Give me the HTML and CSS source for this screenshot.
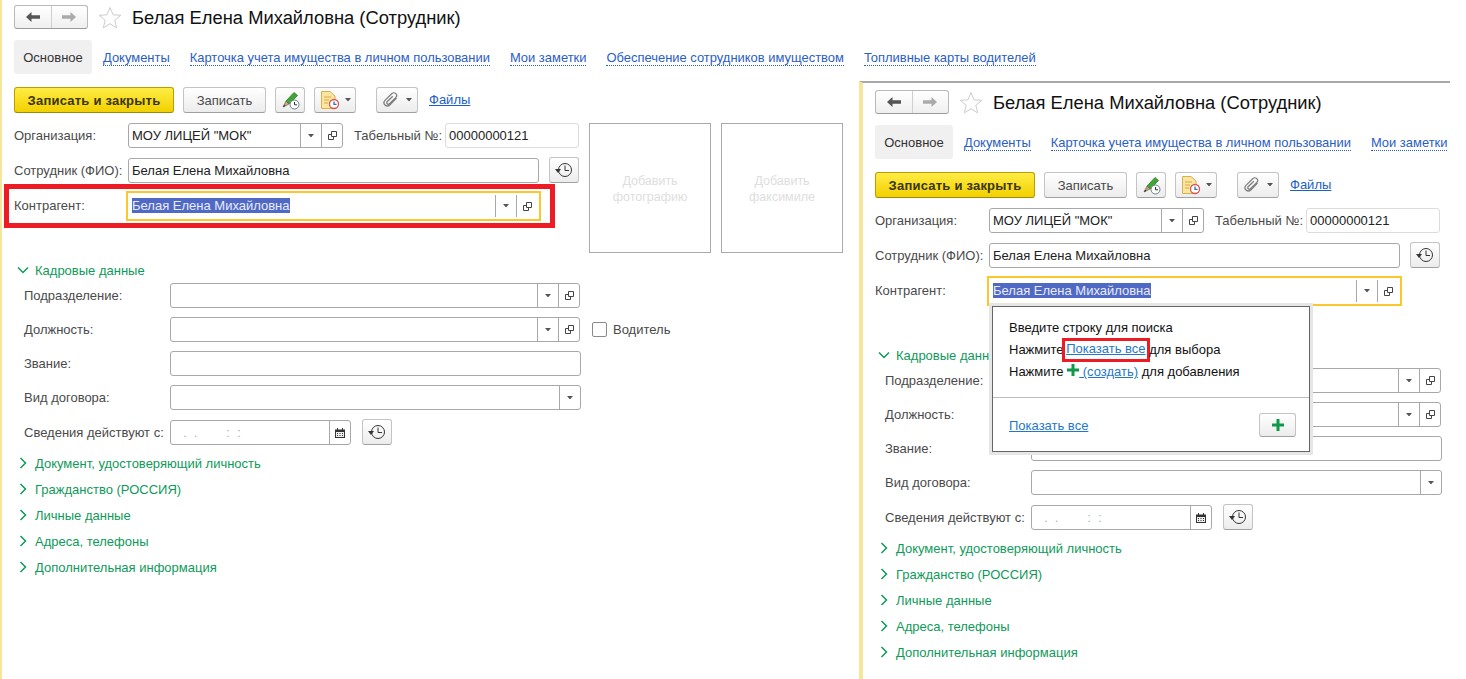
FILE: index.html
```html
<!DOCTYPE html>
<html lang="ru">
<head>
<meta charset="utf-8">
<title>Белая Елена Михайловна (Сотрудник)</title>
<link rel="stylesheet" href="styles.css">
</head>
<body>
<svg class="defs" width="0" height="0" aria-hidden="true">
  <symbol id="i-back" viewBox="0 0 14 10"><path d="M0 5 5.500 0V3.300H14V6.700H5.500V10Z"/></symbol>
  <symbol id="i-fwd" viewBox="0 0 14 10"><path d="M14 5 8.500 0V3.300H0V6.700H8.500V10Z"/></symbol>
  <symbol id="i-star" viewBox="0 0 24 23"><path d="M12 1.500 15 8.800 22.800 9.300 16.800 14.300 18.700 21.900 12 17.700 5.300 21.900 7.200 14.300 1.200 9.300 9 8.800Z" fill="#fff" stroke="#c9cdd0"/></symbol>
  <symbol id="i-drop" viewBox="0 0 7 4"><path d="M0 0H7L3.500 4Z"/></symbol>
  <symbol id="i-open" viewBox="0 0 9 9"><path d="M3.500 .5H8.500V5.500H3.500ZM3.500 3.500H.5V8.500H5.500V5.500" fill="none" stroke="#444"/></symbol>
  <symbol id="i-hist" viewBox="0 0 18 16"><circle cx="10" cy="8" r="6.500" fill="none" stroke="#333"/><path d="M10 3.500V8.500H14" fill="none" stroke="#333"/><path d="M0 7H6L3 11Z" fill="#333"/></symbol>
  <symbol id="i-cal" viewBox="0 0 10 10"><path d="M0 1.500H2V0H3V1.500H7V0H8V1.500H10V10H0Z" fill="#333"/><path d="M1 4H9V9H1Z" fill="#eee"/><path d="M2 5H3V6H2ZM4.500 5H5.500V6H4.500ZM7 5H8V6H7ZM2 7H3V8H2ZM4.500 7H5.500V8H4.500ZM7 7H8V8H7Z" fill="#333"/></symbol>
  <symbol id="i-pen" viewBox="0 0 20 20"><path d="M6 11 14 2.500 17.500 5.500 9 14Z" fill="#3fa535" stroke="#2d7a28" stroke-width=".8"/><path d="M6 11 9 14 3 17Z" fill="#c9a86a" stroke="#555" stroke-width=".6"/><path d="M3 17 4.200 14.800 5.500 16Z" fill="#333"/><circle cx="14.500" cy="14.500" r="4.500" fill="#fff" stroke="#6b7d8c"/><path d="M14.500 12V14.800H17" fill="none" stroke="#333"/></symbol>
  <symbol id="i-doc" viewBox="0 0 20 20"><path d="M1.500 1.500H10L15 6V18.500H1.500Z" fill="#fbe5a3" stroke="#d9b04a"/><path d="M4 7H11M4 10H9M4 13H8" stroke="#d9a93d"/><circle cx="14" cy="14" r="4.500" fill="#fff" stroke="#d9534f" stroke-width="1.300"/><path d="M14 11.500V14.300H16.500" fill="none" stroke="#2f6fb7" stroke-width="1.300"/></symbol>
  <symbol id="i-clip" viewBox="0 0 16 16"><path d="M13.500 6 7 12.800C5.500 14.300 3.300 14.300 2 13 .7 11.700.7 9.600 2.200 8.100L8.700 1.700C9.900.5 11.700.5 12.800 1.600 13.900 2.700 13.900 4.400 12.700 5.600L6.500 11.700C5.800 12.400 4.800 12.400 4.200 11.800 3.600 11.200 3.600 10.200 4.300 9.500L9.800 4.200" fill="none" stroke="#808080" stroke-width="1.300"/></symbol>
  <symbol id="i-plus" viewBox="0 0 12 12"><path d="M4.500 0H7.500V4.500H12V7.500H7.500V12H4.500V7.500H0V4.500H4.500Z" fill="#0e9a48"/></symbol>
  <symbol id="i-down" viewBox="0 0 12 8"><path d="M1 1.500 6 6.500 11 1.500" fill="none" stroke="#0f9a5a" stroke-width="1.500"/></symbol>
  <symbol id="i-right" viewBox="0 0 8 12"><path d="M1.500 1 6.500 6 1.500 11" fill="none" stroke="#0f9a5a" stroke-width="1.500"/></symbol>
</svg>

<section class="window window-main">
  <header class="head">
    <div class="nav">
      <span class="nav-btn"><svg class="arrow arrow-on"><use href="#i-back"/></svg></span>
      <span class="nav-btn"><svg class="arrow arrow-off"><use href="#i-fwd"/></svg></span>
    </div>
    <svg class="star"><use href="#i-star"/></svg>
    <h1 class="title">Белая Елена Михайловна (Сотрудник)</h1>
  </header>
  <nav class="tabs">
    <span class="tab-active">Основное</span>
    <a class="tab">Документы</a>
    <a class="tab">Карточка учета имущества в личном пользовании</a>
    <a class="tab">Мои заметки</a>
    <a class="tab">Обеспечение сотрудников имуществом</a>
    <a class="tab">Топливные карты водителей</a>
  </nav>
  <div class="toolbar">
    <button class="btn btn-primary">Записать и закрыть</button>
    <button class="btn btn-save">Записать</button>
    <button class="btn btn-icon"><svg class="ico20"><use href="#i-pen"/></svg></button>
    <button class="btn btn-menu"><svg class="ico20"><use href="#i-doc"/></svg><svg class="drop"><use href="#i-drop"/></svg></button>
    <button class="btn btn-menu btn-clip"><svg class="ico16"><use href="#i-clip"/></svg><svg class="drop"><use href="#i-drop"/></svg></button>
    <a class="files">Файлы</a>
  </div>
  <div class="main">
    <div class="fields">
      <div class="row">
        <span class="label label-top">Организация:</span>
        <div class="field field-org"><span class="value">МОУ ЛИЦЕЙ "МОК"</span><span class="fbtn"><svg class="drop"><use href="#i-drop"/></svg></span><span class="fbtn"><svg class="open"><use href="#i-open"/></svg></span></div>
        <span class="label-num">Табельный №:</span>
        <div class="field field-num"><span class="value">00000000121</span></div>
      </div>
      <div class="row row-second">
        <span class="label label-top">Сотрудник (ФИО):</span>
        <div class="field field-fio"><span class="value">Белая Елена Михайловна</span></div>
        <button class="btn btn-hist"><svg class="hist"><use href="#i-hist"/></svg></button>
      </div>
      <div class="row row-focus">
        <span class="label label-focus">Контрагент:</span>
        <div class="focus"><span class="value-focus"><span class="selected">Белая Елена Михайловна</span></span><span class="fbtn fbtn-focus"><svg class="drop"><use href="#i-drop"/></svg></span><span class="fbtn fbtn-focus"><svg class="open"><use href="#i-open"/></svg></span></div>
        <span class="red-box"></span>
      </div>
    </div>
    <div class="photo">Добавить<br>фотографию</div>
    <div class="photo">Добавить<br>факсимиле</div>
  </div>
  <div class="section section-first"><svg class="chev-down"><use href="#i-down"/></svg><span>Кадровые данные</span></div>
  <div class="group">
    <div class="row"><span class="label label-sec">Подразделение:</span><div class="field field-sec"><span class="value"></span><span class="fbtn"><svg class="drop"><use href="#i-drop"/></svg></span><span class="fbtn"><svg class="open"><use href="#i-open"/></svg></span></div></div>
    <div class="row row-sec"><span class="label label-sec">Должность:</span><div class="field field-sec"><span class="value"></span><span class="fbtn"><svg class="drop"><use href="#i-drop"/></svg></span><span class="fbtn"><svg class="open"><use href="#i-open"/></svg></span></div><span class="check"></span><span class="check-label">Водитель</span></div>
    <div class="row row-sec"><span class="label label-sec">Звание:</span><div class="field field-wide"></div></div>
    <div class="row row-sec"><span class="label label-sec">Вид договора:</span><div class="field field-wide"><span class="value"></span><span class="fbtn"><svg class="drop"><use href="#i-drop"/></svg></span></div></div>
    <div class="row row-date"><span class="label label-sec">Сведения действуют с:</span><div class="field field-date"><span class="value value-date">.  .        :  :</span><span class="fbtn"><svg class="cal"><use href="#i-cal"/></svg></span></div><button class="btn btn-hist"><svg class="hist"><use href="#i-hist"/></svg></button></div>
  </div>
  <div class="sections">
    <div class="section"><svg class="chev-right"><use href="#i-right"/></svg><span>Документ, удостоверяющий личность</span></div>
    <div class="section"><svg class="chev-right"><use href="#i-right"/></svg><span>Гражданство (РОССИЯ)</span></div>
    <div class="section"><svg class="chev-right"><use href="#i-right"/></svg><span>Личные данные</span></div>
    <div class="section"><svg class="chev-right"><use href="#i-right"/></svg><span>Адреса, телефоны</span></div>
    <div class="section"><svg class="chev-right"><use href="#i-right"/></svg><span>Дополнительная информация</span></div>
  </div>
</section>

<section class="window window-second">
  <header class="head">
    <div class="nav">
      <span class="nav-btn"><svg class="arrow arrow-on"><use href="#i-back"/></svg></span>
      <span class="nav-btn"><svg class="arrow arrow-off"><use href="#i-fwd"/></svg></span>
    </div>
    <svg class="star"><use href="#i-star"/></svg>
    <h1 class="title">Белая Елена Михайловна (Сотрудник)</h1>
  </header>
  <nav class="tabs">
    <span class="tab-active">Основное</span>
    <a class="tab">Документы</a>
    <a class="tab">Карточка учета имущества в личном пользовании</a>
    <a class="tab">Мои заметки</a>
  </nav>
  <div class="toolbar">
    <button class="btn btn-primary">Записать и закрыть</button>
    <button class="btn btn-save">Записать</button>
    <button class="btn btn-icon"><svg class="ico20"><use href="#i-pen"/></svg></button>
    <button class="btn btn-menu"><svg class="ico20"><use href="#i-doc"/></svg><svg class="drop"><use href="#i-drop"/></svg></button>
    <button class="btn btn-menu btn-clip"><svg class="ico16"><use href="#i-clip"/></svg><svg class="drop"><use href="#i-drop"/></svg></button>
    <a class="files">Файлы</a>
  </div>
  <div class="main">
    <div class="fields">
      <div class="row">
        <span class="label label-top">Организация:</span>
        <div class="field field-org"><span class="value">МОУ ЛИЦЕЙ "МОК"</span><span class="fbtn"><svg class="drop"><use href="#i-drop"/></svg></span><span class="fbtn"><svg class="open"><use href="#i-open"/></svg></span></div>
        <span class="label-num">Табельный №:</span>
        <div class="field field-num"><span class="value">00000000121</span></div>
      </div>
      <div class="row row-second">
        <span class="label label-top">Сотрудник (ФИО):</span>
        <div class="field field-fio"><span class="value">Белая Елена Михайловна</span></div>
        <button class="btn btn-hist"><svg class="hist"><use href="#i-hist"/></svg></button>
      </div>
      <div class="row row-focus">
        <span class="label label-focus">Контрагент:</span>
        <div class="focus"><span class="value-focus"><span class="selected">Белая Елена Михайловна</span></span><span class="fbtn fbtn-focus"><svg class="drop"><use href="#i-drop"/></svg></span><span class="fbtn fbtn-focus"><svg class="open"><use href="#i-open"/></svg></span></div>
      </div>
    </div>
  </div>
  <div class="section section-first"><svg class="chev-down"><use href="#i-down"/></svg><span>Кадровые данные</span></div>
  <div class="group">
    <div class="row"><span class="label label-sec">Подразделение:</span><div class="field field-sec"><span class="value"></span><span class="fbtn"><svg class="drop"><use href="#i-drop"/></svg></span><span class="fbtn"><svg class="open"><use href="#i-open"/></svg></span></div></div>
    <div class="row row-sec"><span class="label label-sec">Должность:</span><div class="field field-sec"><span class="value"></span><span class="fbtn"><svg class="drop"><use href="#i-drop"/></svg></span><span class="fbtn"><svg class="open"><use href="#i-open"/></svg></span></div></div>
    <div class="row row-sec"><span class="label label-sec">Звание:</span><div class="field field-wide"></div></div>
    <div class="row row-sec"><span class="label label-sec">Вид договора:</span><div class="field field-wide"><span class="value"></span><span class="fbtn"><svg class="drop"><use href="#i-drop"/></svg></span></div></div>
    <div class="row row-date"><span class="label label-sec">Сведения действуют с:</span><div class="field field-date"><span class="value value-date">.  .        :  :</span><span class="fbtn"><svg class="cal"><use href="#i-cal"/></svg></span></div><button class="btn btn-hist"><svg class="hist"><use href="#i-hist"/></svg></button></div>
  </div>
  <div class="sections">
    <div class="section"><svg class="chev-right"><use href="#i-right"/></svg><span>Документ, удостоверяющий личность</span></div>
    <div class="section"><svg class="chev-right"><use href="#i-right"/></svg><span>Гражданство (РОССИЯ)</span></div>
    <div class="section"><svg class="chev-right"><use href="#i-right"/></svg><span>Личные данные</span></div>
    <div class="section"><svg class="chev-right"><use href="#i-right"/></svg><span>Адреса, телефоны</span></div>
    <div class="section"><svg class="chev-right"><use href="#i-right"/></svg><span>Дополнительная информация</span></div>
  </div>

  <div class="popup">
    <div class="popup-text">
      <p class="popup-line">Введите строку для поиска</p>
      <p class="popup-line">Нажмите <a class="plink mark">Показать все</a> для выбора</p>
      <p class="popup-line">Нажмите <svg class="plus-inline"><use href="#i-plus"/></svg><a class="plink"> (создать)</a> для добавления</p>
    </div>
    <div class="popup-foot">
      <a class="plink plink-foot">Показать все</a>
      <button class="btn btn-plus"><svg class="plus"><use href="#i-plus"/></svg></button>
    </div>
  </div>
</section>
</body>
</html>
```
FILE: styles.css
```css
* { box-sizing: border-box; }
html, body { margin: 0; padding: 0; height: 100%; overflow: hidden; background: #fff; }
body { position: relative; font: 13px/16px "Liberation Sans", Arial, sans-serif; color: #4a4a4a; }
.defs { position: absolute; }
svg { display: block; flex: none; }
button { font: inherit; padding: 0; cursor: default; }
p { margin: 0; }

.window { background: #fff; border-left: solid #f5e69a; padding-left: 12px; }
.window-main { width: 859px; height: 679px; border-left-width: 2px; padding-top: 5px; }
.window-second { position: absolute; left: 859px; top: 81px; width: 591px; height: 598px; overflow: hidden;
  border-left-width: 4px; border-top: 2px solid #a8a8a8; padding-top: 7px; }

.head { display: flex; align-items: center; height: 24px; margin-bottom: 11px; }
.nav { display: flex; flex: none; width: 74px; height: 24px; border: 1px solid #b9b9b9; border-bottom-color: #9c9c9c; border-radius: 3px;
  background: linear-gradient(#fff, #efefef); }
.nav-btn { flex: 1; display: flex; align-items: center; justify-content: center; }
.nav-btn + .nav-btn { border-left: 1px solid #cfcfcf; }
.arrow { width: 14px; height: 10px; }
.arrow-on { fill: #555; }
.arrow-off { fill: #aaa; }
.star { width: 24px; height: 23px; margin-left: 10px; }
.title { margin: 2px 0 0 10px; font-size: 18.350px; font-weight: 400; line-height: 22px; color: #111; white-space: nowrap; }

.tabs { display: flex; align-items: center; height: 34px; margin-bottom: 13px; white-space: nowrap; }
.tab-active { flex: none; width: 78px; height: 34px; line-height: 36px; text-align: center; background: #f0f0f0; border-radius: 3px; color: #333; margin-right: 11px; }
.tab { flex: none; font-size: 12.950px; color: #2a5ec4; border-bottom: 1px dotted #2a5ec4; line-height: 14px; margin: 3px 20px 0 0; }

.toolbar { display: flex; align-items: center; height: 26px; margin-bottom: 10px; }
.btn { display: flex; align-items: center; justify-content: center; flex: none; height: 26px; border: 1px solid #c4c4c4; border-bottom-color: #a0a0a0; border-radius: 3px;
  background: linear-gradient(#fff, #ececec); color: #4a4a4a; }
.btn-primary { width: 160px; margin-right: 9px; padding-top: 1px; background: linear-gradient(#ffec45, #f2d000); border-color: #b8a000; border-bottom-color: #9c8a10; color: #3a3410; font-weight: 700; letter-spacing: .22px; }
.btn-save { width: 83px; margin-right: 9px; padding-top: 1px; }
.btn-icon { width: 30px; margin-right: 9px; }
.btn-menu { width: 42px; gap: 5px; margin-right: 20px; }
.btn-clip { margin-right: 11px; gap: 7px; }
.ico20 { width: 20px; height: 20px; }
.ico16 { width: 16px; height: 16px; }
.drop { width: 6px; height: 3.500px; fill: #555; }
.files { color: #1c5fc4; text-decoration: underline; }

.main { display: flex; gap: 10px; height: 130px; }
.fields { flex: none; width: 565px; }
.row { position: relative; display: flex; align-items: flex-start; height: 25px; }
.row-second { margin-top: 10px; }
.row-focus { margin-top: 8px; height: 30px; }
.label { flex: none; line-height: 25px; white-space: nowrap; }
.label-top { width: 114px; }
.label-focus { width: 112px; line-height: 30px; }
.label-sec { width: 146px; margin-left: 10px; }
.label-num { flex: none; width: 91px; margin-left: 11px; line-height: 25px; white-space: nowrap; }

.field { display: flex; flex: none; height: 25px; border: 1px solid #a8a8a8; border-radius: 3px; background: #fff; color: #222; }
.field-org { width: 215px; }
.field-num { width: 134px; border-color: #dcdcdc; }
.field-fio { width: 411px; margin-right: 10px; }
.field-sec { width: 410px; }
.field-wide { width: 411px; }
.field-date { width: 181px; margin-right: 11px; }
.value { flex: 1; padding-left: 3px; line-height: 23px; white-space: nowrap; }
.value-date { white-space: pre; padding-left: 12px; color: #9fb4c4; }
.fbtn { display: flex; align-items: center; justify-content: center; flex: none; width: 21px; border-left: 1px solid #a8a8a8; }
.open { width: 9px; height: 9px; }
.cal { width: 10px; height: 10px; }
.btn-hist { flex: none; width: 30px; margin-top: -1px; }
.hist { width: 18px; height: 16px; }

.focus { display: flex; flex: none; width: 415px; height: 30px; border: 2px solid #fbc72b; padding: 2px 2px 2px 4px; background: #fff; color: #222; }
.value-focus { flex: 1; display: flex; align-items: center; padding-bottom: 2px; white-space: nowrap; }
.selected { background: #5069c4; color: #e9ecf8; line-height: 15px; }
.red-box { position: absolute; left: -10px; top: -7px; width: 551px; height: 44px; border: 5px solid #ed1c24; pointer-events: none; }

.photo { flex: none; width: 122px; height: 130px; border: 1px solid #aaa; padding-top: 49px; font-size: 12.500px; text-align: center; color: #dedede; }

.section { display: flex; align-items: center; height: 26px; color: #0f9a5a; white-space: nowrap; }
.section span { margin-left: 8px; padding-top: 2px; }
.section-first { margin-top: 4px; margin-left: 3px; }
.section-first span { margin-left: 6px; }
.chev-down { width: 12px; height: 8px; }
.chev-right { width: 8px; height: 12px; margin-left: 5px; }
.row-sec { margin-top: 9px; }
.row-date { margin-top: 10px; }
.sections { margin-top: 5px; }
.check { flex: none; width: 15px; height: 15px; margin: 5px 6px 0 12px; border: 1px solid #8a8a8a; border-radius: 2px; }
.check-label { line-height: 25px; }

.popup { position: absolute; left: 129px; top: 223px; width: 318px; height: 146px; border: 1px solid #666; background: #fff;
  box-shadow: 0 0 0 3px #e6e6e6; color: #111; z-index: 2; }
.popup-text { height: 91px; padding: 10px 16px 0; border-bottom: 1px solid #bdbdbd; }
.popup-line { display: flex; align-items: center; height: 22px; white-space: pre; }
.plink { color: #1f78c8; text-decoration: underline; }
.plink-foot { margin-top: 3px; }
.mark { outline: 3px solid #ed1c24; outline-offset: 0; padding: 0 1px 2px; margin: 0 -1px 0 -2px; }
.plus-inline { width: 12px; height: 12px; margin: -4px 0 0 0; }
.popup-foot { display: flex; align-items: center; justify-content: space-between; height: 53px; padding: 0 13px 0 16px; }
.btn-plus { width: 37px; height: 24px; }
.plus { width: 12px; height: 12px; }
```
